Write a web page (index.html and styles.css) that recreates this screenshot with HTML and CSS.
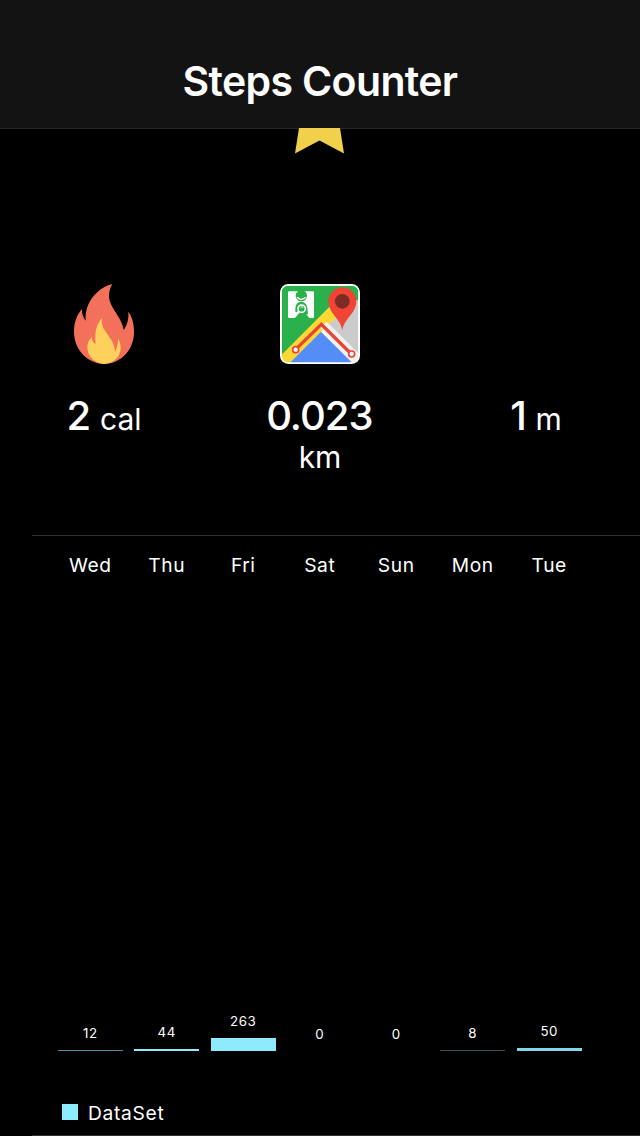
FILE: index.html
```html
<!DOCTYPE html>
<html lang="en">
<head>
<meta charset="utf-8">
<title>Steps Counter</title>
<link rel="stylesheet" href="styles.css">
</head>
<body>
<header class="navbar"><h1 class="title">Steps Counter</h1></header>
<main>
  <div class="award">
    <svg class="star" viewBox="0 0 50 26"><path fill="#f1d04b" d="M4 0H45L49 25.5L24.5 12.5L0 25.5Z"/></svg>
  </div>
  <section class="stats">
    <div class="stat">
      <svg class="flame" viewBox="42 27 180 240">
        <path fill="#f3705a" d="M157 27C124 35 96 61 84 91C78 106 76 121 77 137C69 127 65 114 66 101C49 122 42 144 42 170C42 219 76 263 131 267C186 266 222 222 222 171C222 147 217 126 205 110C207 130 202 149 191 165C187 132 161 111 150 80C144 60 148 43 157 27Z"/>
        <path fill="#ffd15c" d="M126 129C111 147 103 166 107 207C99 203 95 195 96 185C86 195 82 204 82 217C83 244 102 263 131 267C162 266 182 245 182 219C182 208 180 199 174 191C174 206 171 218 165 230C162 199 149 189 136 169C127 155 123 144 126 129Z"/>
      </svg>
      <p class="reading"><span class="value">2</span> cal</p>
    </div>
    <div class="stat">
      <svg class="map" viewBox="30 27 240 240">
        <defs><clipPath id="tile"><rect x="35" y="32" width="230" height="230" rx="20"/></clipPath></defs>
        <rect x="30" y="27" width="240" height="240" rx="25" fill="#fff"/>
        <g clip-path="url(#tile)">
          <path fill="#2bb14c" d="M35 32H265V76L190 92L35 247Z"/>
          <path fill="#cbcbcb" d="M265 75L221 82L172 143L265 236Z"/>
          <path fill="#fdd835" d="M180 94L35 239V262H63L151 174L205 120Z"/>
          <path fill="#f1f1f1" d="M151 159L170 140L265 235V262H242Z"/>
          <path fill="#548df7" d="M58 265L153 170L248 265Z"/>
          <path fill="none" stroke="#e94435" stroke-width="10" d="M77 223L154 148L244 237"/>
        </g>
        <g fill="#fff" stroke="#e94435" stroke-width="5"><circle cx="77" cy="224" r="9"/><circle cx="245" cy="237" r="9"/></g>
        <path fill="#f04435" d="M217 168C214 132 175 116 175 79A42 42 0 0 1 259 79C259 116 220 132 217 168Z"/>
        <circle cx="217" cy="79" r="22" fill="#7d2b25"/>
        <rect x="54" y="49" width="78" height="80" rx="4" fill="#fff"/>
        <path fill="#2bb14c" d="M73 130L82 116L104 110L118 130Z"/>
        <circle cx="94" cy="62" r="17" fill="#2bb14c"/>
        <path fill="none" stroke="#fff" stroke-width="4" d="M81 67Q94 79 107 67"/>
        <path fill="#2bb14c" d="M76 110C75 88 82 81 94 81S113 88 114 118L104 118Z"/>
        <path stroke="#fff" stroke-width="7" stroke-linecap="round" d="M85 111L75 124"/>
        <circle cx="95" cy="101" r="11" fill="#2bb14c" stroke="#fff" stroke-width="5"/>
        <path fill="none" stroke="#fff" stroke-width="3" d="M91 99Q94 93 100 97"/>
      </svg>
      <p class="reading"><span class="value">0.023</span><br>km</p>
    </div>
    <div class="stat stat-plain">
      <p class="reading"><span class="value">1</span> m</p>
    </div>
  </section>
  <section class="chart">
    <div class="days"><span>Wed</span><span>Thu</span><span>Fri</span><span>Sat</span><span>Sun</span><span>Mon</span><span>Tue</span></div>
    <div class="bars">
      <div class="day"><span>12</span><i class="bar dim" style="height:1px"></i></div>
      <div class="day"><span>44</span><i class="bar" style="height:2.3px"></i></div>
      <div class="day"><span>263</span><i class="bar" style="height:13px"></i></div>
      <div class="day"><span>0</span><i class="bar" style="height:0"></i></div>
      <div class="day"><span>0</span><i class="bar" style="height:0"></i></div>
      <div class="day"><span>8</span><i class="bar faint" style="height:1px"></i></div>
      <div class="day"><span>50</span><i class="bar soft" style="height:3px"></i></div>
    </div>
    <div class="legend"><i class="swatch"></i><span>DataSet</span></div>
  </section>
</main>
</body>
</html>
```
FILE: styles.css
```css
* { box-sizing: border-box; }
body {
  margin: 0;
  height: 1136px;
  overflow: hidden;
  background: #000;
  color: #fff;
  font-family: Inter, "Liberation Sans", sans-serif;
}
.navbar {
  height: 129px;
  padding-top: 56px;
  background: #131313;
  border-bottom: 1px solid #262626;
  text-align: center;
}
.title { margin: 0; font-size: 41px; line-height: 50px; font-weight: 600; letter-spacing: -0.65px; }
.award { height: 155px; margin-top: -1px; display: flex; justify-content: center; }
.award + .stats { margin-top: 1px; }
.star { width: 50px; height: 26px; }
.stats { display: grid; grid-template-columns: repeat(3, 208px); column-gap: 8px; height: 251px; }
.stat { display: flex; flex-direction: column; align-items: center; }
.stat-plain { padding-top: 80px; }
.flame { width: 60px; height: 80px; }
.map { width: 80px; height: 80px; }
.reading { margin: 31px 0 0; font-size: 30px; line-height: 38px; text-align: center; }
.value { font-size: 40px; line-height: 42px; font-weight: 450; letter-spacing: -1px; margin-right: 1.4px; }
.chart { height: 601px; margin-left: 32px; border: solid #303030; border-width: 1px 0; padding-left: 20px; }
.days { display: grid; grid-template-columns: repeat(7, 76.5px); padding-top: 17px; font-size: 19.2px; line-height: 24px; letter-spacing: 0.6px; text-align: center; }
.bars { display: grid; grid-template-columns: repeat(7, 76.5px); height: 474px; align-items: end; }
.day { display: flex; flex-direction: column; align-items: center; gap: 9px; font-size: 13.3px; line-height: 16px; letter-spacing: 0.6px; }
.bar { width: 65px; background: #8eebff; }
.dim { background: #538b96; }
.faint { background: #34545b; }
.soft { background: #82d7e9; }
.legend { display: flex; align-items: flex-start; gap: 10px; padding: 50px 0 0 10px; font-size: 19.2px; line-height: 24px; letter-spacing: 0.7px; }
.swatch { width: 16px; height: 16px; margin-top: 3px; background: #8eebff; }
```
